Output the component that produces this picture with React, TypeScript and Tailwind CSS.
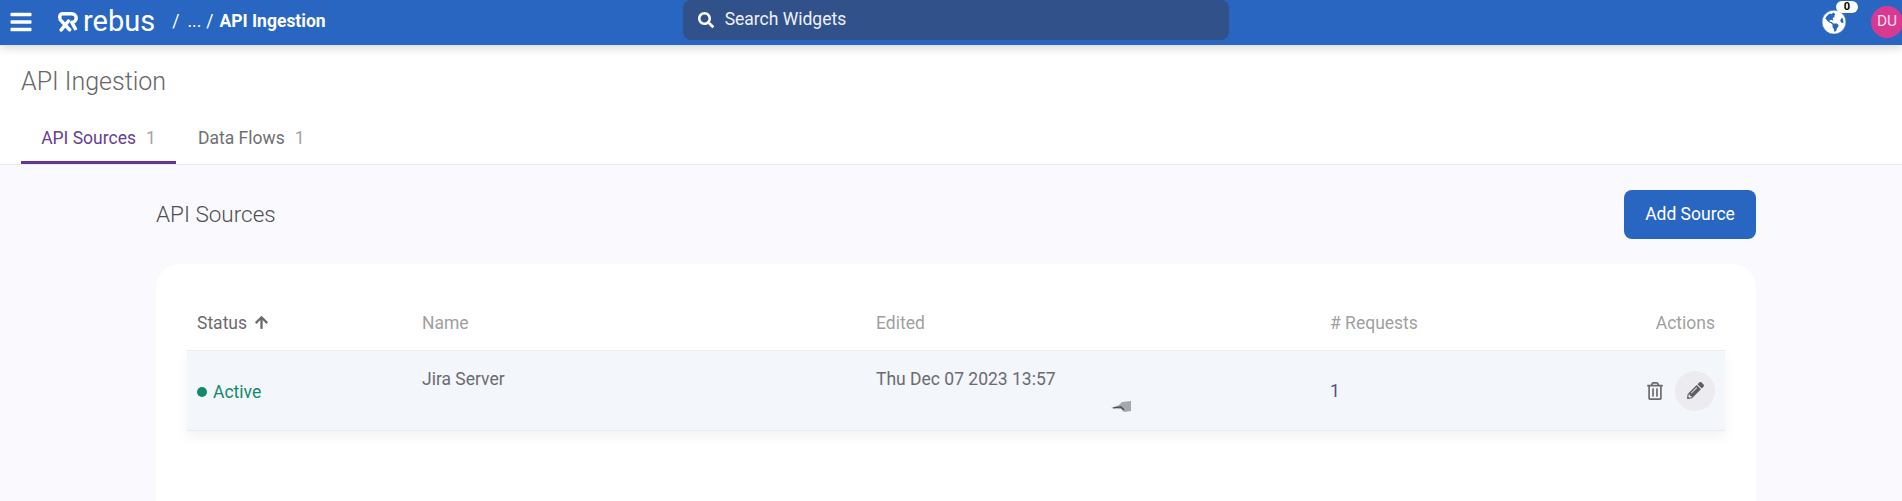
import { FaBars, FaSearch, FaGlobeAmericas, FaPencilAlt, FaRegTrashAlt, FaArrowUp } from "react-icons/fa";

function Logo() {
  return (
    <svg width="20" height="20" viewBox="0 0 20 20" fill="none" className="shrink-0">
      <path d="M1.8 6.5V4.5C1.8 2.9 2.9 1.8 4.5 1.8H13.5C16.3 1.8 18.2 3.5 18.2 6C18.2 8.5 16.4 10.3 13.8 10.3L18 18" stroke="white" strokeWidth="3.5" strokeLinejoin="round" />
      <path d="M2.2 7.6L11.6 17.8M10.5 9L3.2 17.8" stroke="white" strokeWidth="3.5" strokeLinecap="round" />
    </svg>
  );
}

export default function App() {
  return (
    <div className="flex h-[501px] w-[1902px] flex-col overflow-hidden bg-[#f9f9fe] font-['Roboto',sans-serif] text-[#6b6b6d]">
      <header className="z-10 flex h-[45px] shrink-0 items-center bg-[#2866c1] shadow-[0_2px_10px_rgba(0,0,0,0.18)]">
        <FaBars className="ml-[10px] h-[24px] w-[22px] -translate-y-[1px] text-white" />
        <div className="ml-[26px] flex w-[20px] -translate-y-[1px] items-center"><Logo /></div>
        <span className="ml-[5px] -translate-y-[1px] text-[29px] leading-none text-white">rebus</span>
        <div className="ml-[17px] flex -translate-y-[1px] items-center text-[17.5px] text-white">
          <span>/</span>
          <span className="ml-[8px]">...</span>
          <span className="ml-[5px]">/</span>
          <span className="ml-[6px] font-bold">API Ingestion</span>
        </div>
        <div className="ml-[357px] flex h-[40px] w-[546px] -translate-y-[3px] items-center rounded-[8px] bg-[#31518a] pl-[15px] text-[17.5px] text-[#eef1f7]">
          <FaSearch className="h-[16px] w-[16px] text-white" />
          <span className="ml-[11px]">Search Widgets</span>
        </div>
        <div className="ml-auto flex items-center">
          <div className="relative -translate-y-[1px]">
            <div className="flex h-[24px] w-[24px] items-center justify-center rounded-full bg-white">
              <FaGlobeAmericas className="h-[24px] w-[24px] rounded-full bg-[#2866c1] text-white" />
            </div>
            <span className="absolute left-[14px] top-[-9px] flex h-[12px] w-[22px] items-center justify-center rounded-full bg-white text-[11px] font-bold leading-[12px] text-black">0</span>
          </div>
          <div className="ml-[25px] mr-[-1px] flex h-[32px] w-[32px] -translate-y-[1px] items-center justify-center rounded-full bg-[#d83a92] text-[15.5px] text-[#fbdcec]">DU</div>
        </div>
      </header>

      <section className="shrink-0 border-b border-[#e8e8ee] bg-white pl-[21px]">
        <h1 className="pt-[21px] text-[25px] font-light leading-[32px] text-[#66666a]">API Ingestion</h1>
        <nav className="mt-[12px] flex h-[54px] items-stretch text-[17.5px]">
          <div className="flex w-[155px] items-center justify-center border-b-[3px] border-[#66358f] pt-[5px] text-[#66408f]">
            API Sources<span className="ml-[10px] text-[#a3a3a3]">1</span>
          </div>
          <div className="ml-[22px] flex items-center pt-[2px] text-[#6f6f71]">
            Data Flows<span className="ml-[10px] text-[#a3a3a3]">1</span>
          </div>
        </nav>
      </section>

      <main className="flex min-h-0 flex-1 flex-col pl-[156px] pr-[146px]">
        <div className="flex h-[99px] shrink-0 items-start justify-between pt-[25px]">
          <h2 className="pt-[10px] text-[22.5px] font-light leading-[28px] text-[#4f4f52]">API Sources</h2>
          <button className="flex h-[49px] w-[132px] items-center justify-center rounded-[8px] bg-[#2866c1] text-[17.5px] text-white">Add Source</button>
        </div>

        <div className="flex-1 rounded-t-[24px] bg-white px-[31px] pt-[31px]">
          <div className="grid h-[55px] grid-cols-[235px_454px_454px_1fr] items-center pt-[2px] text-[17.5px] text-[#a0a0a0]">
            <div className="flex items-center pl-[10px] text-[#6b6b6d]">
              Status<FaArrowUp className="ml-[8px] h-[15px] w-[13px] -translate-y-[1px] text-[#6b6b6d]" />
            </div>
            <div>Name</div>
            <div>Edited</div>
            <div className="flex justify-between pr-[10px]"><span># Requests</span><span>Actions</span></div>
          </div>
          <div className="grid h-[81px] grid-cols-[235px_454px_454px_1fr] border-y border-[#e9ebef] bg-[#f3f6fb] text-[17.5px] shadow-[0_6px_12px_rgba(0,0,0,0.05)]">
            <div className="flex items-center pl-[10px] pt-[3px] text-[#12896c]">
              <span className="mr-[6px] h-[10px] w-[10px] rounded-full bg-[#12896c]" />Active
            </div>
            <div className="pt-[17px] leading-[22px]">Jira Server</div>
            <div className="relative pt-[17px] leading-[22px]">
              Thu Dec 07 2023 13:57
              <svg width="22" height="12" viewBox="0 0 22 12" className="absolute left-[234px] top-[50px]">
                <path d="M1 7L9 4L12 1L21 0V10L14 11L11 8Z" fill="#a5a8aa" />
                <path d="M3 7L11 6L14 9" stroke="#44474b" strokeWidth="1.2" fill="none" />
              </svg>
            </div>
            <div className="flex items-center justify-between pr-[10px]">
              <span className="pt-[2px] text-[#5b4a8a]">1</span>
              <div className="flex items-center">
                <FaRegTrashAlt className="h-[18px] w-[16px] text-[#6b6b6d]" />
                <div className="ml-[12px] flex h-[40px] w-[40px] items-center justify-center rounded-full bg-[#ececf0]">
                  <FaPencilAlt className="h-[17px] w-[17px] text-[#5f5f62]" />
                </div>
              </div>
            </div>
          </div>
        </div>
      </main>
    </div>
  );
}
